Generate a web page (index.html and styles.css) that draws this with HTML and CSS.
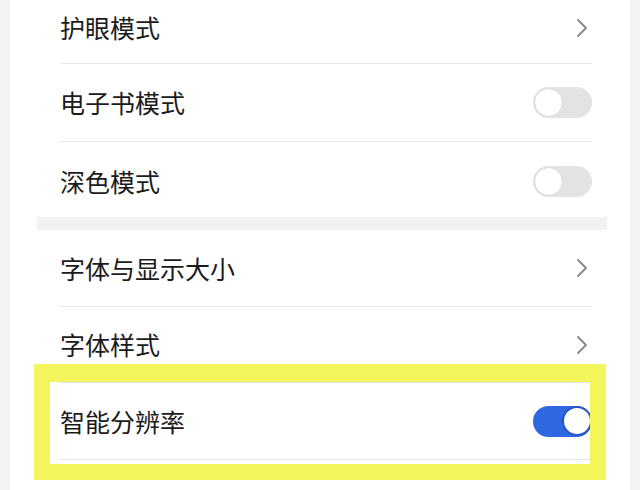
FILE: index.html
```html
<!DOCTYPE html>
<html lang="zh-CN">
<head>
<meta charset="utf-8">
<title>显示设置</title>
<link rel="stylesheet" href="styles.css">
</head>
<body>
<div class="card">
  <div class="group">
    <div class="row row-cut">
      <span class="label">护眼模式</span>
      <svg class="chev" viewBox="0 0 12 20" width="12" height="20"><polyline points="2,2 10,10 2,18"/></svg>
    </div>
    <div class="row">
      <span class="label">电子书模式</span>
      <span class="toggle"><span class="knob"></span></span>
    </div>
    <div class="row row-last">
      <span class="label">深色模式</span>
      <span class="toggle"><span class="knob"></span></span>
    </div>
  </div>
  <div class="sep"></div>
  <div class="group">
    <div class="row row-a">
      <span class="label">字体与显示大小</span>
      <svg class="chev" viewBox="0 0 12 20" width="12" height="20"><polyline points="2,2 10,10 2,18"/></svg>
    </div>
    <div class="row row-b">
      <span class="label">字体样式</span>
      <svg class="chev" viewBox="0 0 12 20" width="12" height="20"><polyline points="2,2 10,10 2,18"/></svg>
    </div>
    <div class="row row-a row-hl">
      <span class="label">智能分辨率</span>
      <span class="toggle on"><span class="knob"></span></span>
    </div>
  </div>
  <div class="highlight"></div>
</div>
</body>
</html>
```

FILE: styles.css
```css
html, body {
  margin: 0;
  padding: 0;
  background: #f4f4f4;
}
body {
  font-family: "Noto Sans CJK SC", "Noto Sans", sans-serif;
  color: #1b1b1b;
}
.card {
  position: relative;
  margin: 0 10px;
  background: #ffffff;
  min-height: 490px;
  box-sizing: border-box;
}
.row {
  display: flex;
  align-items: center;
  justify-content: space-between;
  margin: 0 38px 0 50px;
  height: 78px;
  box-sizing: border-box;
  border-bottom: 1px solid #e8e8e8;
}
.row-cut {
  height: 64px;
  padding-bottom: 8px;
}
.row-last {
  height: 75px;
  border-bottom: none;
  padding-top: 4px;
}
.row-a { height: 77px; }
.row-b { height: 76px; }
.row-hl { border-bottom-color: #e2e3ec; }
.row-b { border-bottom-color: #e2e3ec; }
.label {
  font-size: 25px;
  line-height: 1;
  letter-spacing: 0;
}
.chev {
  margin-right: 4px;
  fill: none;
  stroke: #858585;
  stroke-width: 1.8;
  stroke-linecap: round;
  stroke-linejoin: round;
}
.sep {
  height: 13px;
  margin: 0 23px 0 27px;
  background: #f2f2f2;
}
.toggle {
  display: flex;
  align-items: center;
  justify-content: flex-start;
  width: 59px;
  height: 31px;
  box-sizing: border-box;
  padding: 0 1px;
  border-radius: 16px;
  background: #e3e3e3;
}
.knob {
  width: 29px;
  height: 29px;
  box-sizing: border-box;
  border-radius: 50%;
  background: #ffffff;
  border: 1.5px solid #d7d7d7;
}
.toggle.on {
  justify-content: flex-end;
  background: #2f67e3;
  padding: 0;
}
.toggle.on .knob {
  width: 30px;
  height: 30px;
  border: 2px solid #2a55c2;
}
.highlight {
  position: absolute;
  left: 24px;
  top: 364px;
  width: 572px;
  height: 116px;
  box-sizing: border-box;
  border-style: solid;
  border-color: #f3f55c;
  border-width: 18px 16px 16px 16px;
  pointer-events: none;
}
```
